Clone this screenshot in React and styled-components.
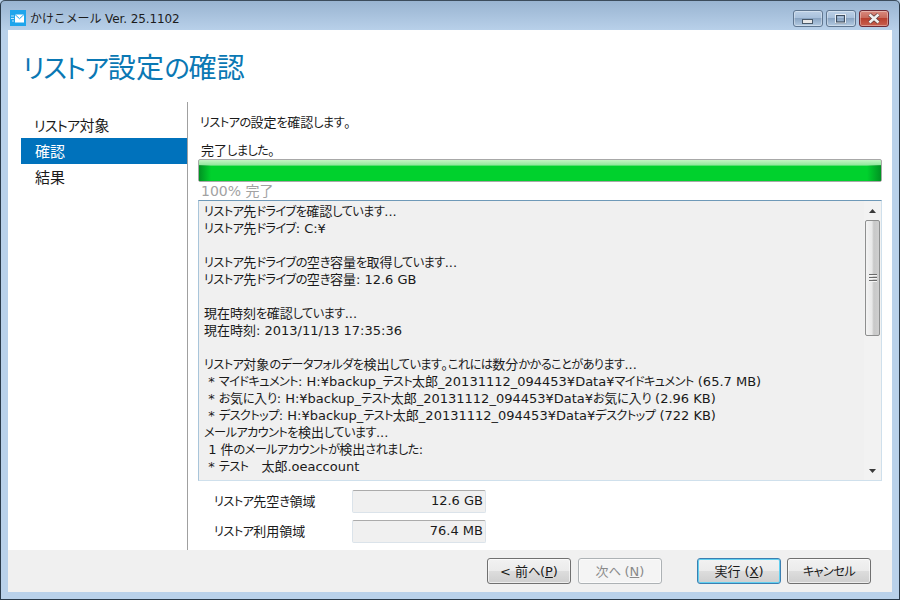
import React from "react";
import styled, { createGlobalStyle } from "styled-components";

const GlobalStyle = createGlobalStyle`
  html, body {
    margin: 0;
    padding: 0;
    background: #b9d1ea;
  }
  body {
    font-family: "DejaVu Sans", "Noto Sans CJK JP", sans-serif;
    font-feature-settings: "palt";
    color: #1a1a1a;
  }
`;

const Frame = styled.div`
  width: 900px;
  height: 600px;
  box-sizing: border-box;
  display: flex;
  flex-direction: column;
  overflow: hidden;
  border: 1px solid #2a3a4a;
  border-top-color: #3c4c5c;
  border-radius: 5px 5px 0 0;
  background: linear-gradient(#99b4d1 0, #b9d1ea 30px);
  padding: 0 7px 7px;
`;

const TitleBar = styled.div`
  height: 29px;
  flex: none;
  box-sizing: border-box;
  display: flex;
  align-items: center;
  gap: 4px;
  padding: 4px 2px 0;
`;

const AppName = styled.span`
  font-size: 12px;
  flex: 1;
  margin-top: -1px;
  color: #1c1c1c;
  font-feature-settings: normal;
  letter-spacing: -0.1px;
`;

const Controls = styled.div`
  display: flex;
  gap: 3px;
  align-self: flex-start;
  margin-top: 5px;
  margin-right: 1px;
`;

const ControlButton = styled.div`
  width: 30px;
  height: 17px;
  box-sizing: border-box;
  border: 1px solid ${(p) => (p.$close ? "#6e2a36" : "#5f7690")};
  border-radius: 3px;
  display: flex;
  align-items: center;
  justify-content: center;
  background: ${(p) =>
    p.$close
      ? "linear-gradient(#d98a7e 0, #c96a5c 45%, #b8402f 50%, #c9604f 100%)"
      : "linear-gradient(#bcd0e6 0, #a9c1dc 45%, #8aa5c3 50%, #b4cbe2 100%)"};
  box-shadow: inset 0 0 0 1px rgba(255, 255, 255, 0.35);
`;

const Window = styled.div`
  flex: 1;
  min-height: 0;
  display: flex;
  flex-direction: column;
  background: #fff;
`;

const Heading = styled.h1`
  margin: 0;
  height: 72px;
  flex: none;
  box-sizing: border-box;
  padding: 20px 0 0 15px;
  font-size: 28px;
  line-height: 38px;
  font-weight: 400;
  letter-spacing: 0.35px;
  color: #0a78b4;
`;

const Main = styled.div`
  flex: 1;
  min-height: 0;
  display: flex;
  padding-left: 13px;
`;

const Sidebar = styled.nav`
  width: 166px;
  flex: none;
  padding-top: 10px;
`;

const NavItem = styled.div`
  height: 26px;
  line-height: 29px;
  padding-left: ${(p) => (p.$first ? 13 : 14)}px;
  font-size: 15px;
  color: ${(p) => (p.$active ? "#fff" : "#1a1a1a")};
  background: ${(p) => (p.$active ? "#0072bc" : "transparent")};
`;

const Content = styled.div`
  flex: 1;
  min-width: 0;
  border-left: 1px solid #a0a0a0;
  padding: 0 10px;
  display: flex;
  flex-direction: column;
`;

const Intro = styled.div`
  font-size: 13px;
  line-height: 20px;
  margin: 11px 0 0 2px;
`;

const StatusLabel = styled.div`
  font-size: 13px;
  line-height: 15px;
  margin: 10px 0 0 3px;
`;

const ProgressTrack = styled.div`
  height: 23px;
  box-sizing: border-box;
  flex: none;
  border: 1px solid #a8a8a8;
  border-radius: 2px;
  background: linear-gradient(#c4f5c4 0, #8fe79b 25%, #00d12d 28%, #00d12d 100%);
  position: relative;
  &::after {
    content: "";
    position: absolute;
    inset: 5px 0 0 0;
    background: linear-gradient(
      90deg,
      rgba(0, 120, 30, 0.7) 0,
      transparent 12px,
      transparent calc(100% - 14px),
      rgba(0, 120, 30, 0.7) 100%
    );
  }
`;

const ProgressText = styled.div`
  font-size: 14px;
  line-height: 17px;
  padding-top: 1px;
  color: #a2a2a2;
  margin-left: 3px;
`;

const LogBox = styled.div`
  height: 281px;
  flex: none;
  box-sizing: border-box;
  display: flex;
  border: 1px solid #cfe0ec;
  border-top-color: #6f99b8;
  border-left-color: #a9c5da;
  background: #f0f0f0;
`;

const LogText = styled.div`
  flex: 1;
  min-width: 0;
  overflow: hidden;
  padding: 2px 0 0 5px;
  font-size: 13px;
  line-height: 17px;
  white-space: pre;
`;

const LogLine = styled.div`
  height: 17px;
`;

const ScrollBar = styled.div`
  width: 17px;
  flex: none;
  display: flex;
  flex-direction: column;
  align-items: center;
  background: #f2f2f2;
`;

const ScrollArrow = styled.div`
  height: 19px;
  flex: none;
  display: flex;
  align-items: center;
  justify-content: center;
`;

const ScrollThumb = styled.div`
  width: 15px;
  height: 116px;
  box-sizing: border-box;
  flex: none;
  border: 1px solid #8e8f8f;
  border-radius: 2px;
  background: linear-gradient(90deg, #f4f4f4 0, #e8e8e8 45%, #c8c8c8 60%, #cfcfcf 100%);
  display: flex;
  align-items: center;
  justify-content: center;
`;

const ScrollSpace = styled.div`
  flex: 1;
`;

const Stats = styled.div`
  display: flex;
  flex-direction: column;
  gap: 7px;
  padding: 9px 0 0 16px;
`;

const StatRow = styled.div`
  display: flex;
  align-items: center;
`;

const StatLabel = styled.div`
  width: 138px;
  font-size: 13px;
  margin-top: -2px;
`;

const StatValue = styled.div`
  width: 134px;
  height: 23px;
  box-sizing: border-box;
  border: 1px solid #dbe3ea;
  border-top-color: #ababab;
  border-radius: 2px;
  background: #f0f0f0;
  font-size: 13px;
  line-height: 20px;
  text-align: right;
  padding-right: 2px;
`;

const Footer = styled.div`
  height: 42px;
  flex: none;
  box-sizing: border-box;
  background: #f0f0f0;
  display: flex;
  align-items: center;
  justify-content: flex-end;
  padding: 0 21px 0 0;
  gap: 6px;
`;

const Button = styled.div`
  width: 84px;
  height: 26px;
  box-sizing: border-box;
  border: 1px solid ${(p) => (p.$disabled ? "#adb2b5" : p.$primary ? "#3c7fb1" : "#707070")};
  border-radius: 3px;
  background: ${(p) =>
    p.$disabled
      ? "#f4f4f4"
      : "linear-gradient(#f2f2f2 0, #ebebeb 48%, #dddddd 50%, #cfcfcf 100%)"};
  box-shadow: ${(p) => (p.$primary ? "inset 0 0 0 1px #62d0f0" : "inset 0 0 0 1px rgba(255,255,255,0.6)")};
  color: ${(p) => (p.$disabled ? "#8a8a8a" : "#1a1a1a")};
  font-size: 13px;
  line-height: 26px;
  text-align: center;
  margin-left: ${(p) => p.$gapLeft || 0}px;
`;

const AccessKey = styled.span`
  text-decoration: underline;
`;

// kana in the reference's UI font runs narrower than its kanji
const KanaRun = styled.span`
  font-size: 0.94em;
  letter-spacing: -0.05em;
`;

const Jp = ({ children }) =>
  children.split(/([\u3040-\u30ff]+)/).map((part, i) =>
    i % 2 ? <KanaRun key={i}>{part}</KanaRun> : part
  );

const logLines = [
  "リストア先ドライブを確認しています...",
  "リストア先ドライブ: C:¥",
  "",
  "リストア先ドライブの空き容量を取得しています...",
  "リストア先ドライブの空き容量: 12.6 GB",
  "",
  "現在時刻を確認しています...",
  "現在時刻: 2013/11/13 17:35:36",
  "",
  "リストア対象のデータフォルダを検出しています。これには数分かかることがあります...",
  " * マイドキュメント: H:¥backup_テスト太郎_20131112_094453¥Data¥マイドキュメント (65.7 MB)",
  " * お気に入り: H:¥backup_テスト太郎_20131112_094453¥Data¥お気に入り (2.96 KB)",
  " * デスクトップ: H:¥backup_テスト太郎_20131112_094453¥Data¥デスクトップ (722 KB)",
  "メールアカウントを検出しています...",
  " 1 件のメールアカウントが検出されました:",
  " * テスト　太郎.oeaccount",
];

const MailIcon = () => (
  <svg width="16" height="16" viewBox="0 0 16 16">
    <rect width="16" height="16" fill="#1ea5ec" />
    <path d="M5 4.5h9v8H5z" fill="#fff" />
    <path d="M5 4.5l4.5 4.2L14 4.5" fill="none" stroke="#1ea5ec" strokeWidth="1" />
    <path d="M1 6h3M1 8.5h3M2 11h2" stroke="#bfe6fb" strokeWidth="1" />
  </svg>
);

const MinIcon = () => (
  <svg width="12" height="13" viewBox="0 0 12 13">
    <rect x="0.5" y="7.5" width="10" height="4" fill="#e8e8e8" stroke="#4a5a6a" strokeWidth="1" />
  </svg>
);

const MaxIcon = () => (
  <svg width="12" height="10" viewBox="0 0 12 10">
    <rect x="1" y="1" width="9" height="7.5" fill="none" stroke="#3e4e60" strokeWidth="2.2" />
    <rect x="0.5" y="0.5" width="10" height="8.5" fill="none" stroke="#e8eef5" strokeWidth="1" />
  </svg>
);

const CloseIcon = () => (
  <svg width="14" height="11" viewBox="0 0 14 11">
    <path d="M2.5 1.5l9 8M11.5 1.5l-9 8" stroke="#5a3a3a" strokeWidth="4" />
    <path d="M2.5 1.5l9 8M11.5 1.5l-9 8" stroke="#f0f0f0" strokeWidth="2.6" />
  </svg>
);

const GripIcon = () => (
  <svg width="8" height="9" viewBox="0 0 8 9">
    <path d="M0 .5h8M0 3.5h8M0 6.5h8" stroke="#6a6a6a" strokeWidth="1" />
    <path d="M0 1.5h8M0 4.5h8M0 7.5h8" stroke="#f4f4f4" strokeWidth="1" />
  </svg>
);

const Arrow = ({ down }) => (
  <svg width="7" height="4" viewBox="0 0 7 4">
    <path d={down ? "M0 0h7L3.5 4z" : "M3.5 0L7 4H0z"} fill="#3a3a3a" />
  </svg>
);

export default function App() {
  return (
    <>
      <GlobalStyle />
      <Frame>
        <TitleBar>
          <MailIcon />
          <AppName>かけこメール Ver. 25.1102</AppName>
          <Controls>
            <ControlButton><MinIcon /></ControlButton>
            <ControlButton><MaxIcon /></ControlButton>
            <ControlButton $close><CloseIcon /></ControlButton>
          </Controls>
        </TitleBar>
        <Window>
          <Heading><Jp>リストア設定の確認</Jp></Heading>
          <Main>
            <Sidebar>
              <NavItem $first><Jp>リストア対象</Jp></NavItem>
              <NavItem $active>確認</NavItem>
              <NavItem>結果</NavItem>
            </Sidebar>
            <Content>
              <Intro><Jp>リストアの設定を確認します。</Jp></Intro>
              <StatusLabel><Jp>完了しました。</Jp></StatusLabel>
              <ProgressTrack />
              <ProgressText>100% 完了</ProgressText>
              <LogBox>
                <LogText>
                  {logLines.map((line, i) => (
                    <LogLine key={i}><Jp>{line}</Jp></LogLine>
                  ))}
                </LogText>
                <ScrollBar>
                  <ScrollArrow><Arrow /></ScrollArrow>
                  <ScrollThumb><GripIcon /></ScrollThumb>
                  <ScrollSpace />
                  <ScrollArrow><Arrow down /></ScrollArrow>
                </ScrollBar>
              </LogBox>
              <Stats>
                <StatRow>
                  <StatLabel><Jp>リストア先空き領域</Jp></StatLabel>
                  <StatValue>12.6 GB</StatValue>
                </StatRow>
                <StatRow>
                  <StatLabel><Jp>リストア利用領域</Jp></StatLabel>
                  <StatValue>76.4 MB</StatValue>
                </StatRow>
              </Stats>
            </Content>
          </Main>
          <Footer>
            <Button>&lt; 前<Jp>へ</Jp>(<AccessKey>P</AccessKey>)</Button>
            <Button $disabled $gapLeft={1}>次<Jp>へ</Jp> (<AccessKey>N</AccessKey>)</Button>
            <Button $primary $gapLeft={29}>実行 (<AccessKey>X</AccessKey>)</Button>
            <Button><Jp>キャンセル</Jp></Button>
          </Footer>
        </Window>
      </Frame>
    </>
  );
}
